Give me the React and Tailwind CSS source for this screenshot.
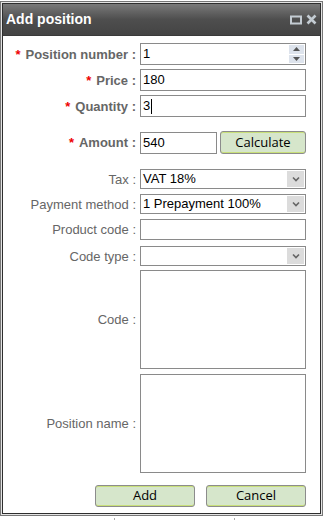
import React from "react";

const labelFont = { fontFamily: '"Liberation Sans", Arial, sans-serif' };

function Label({ children, required, bold }) {
  return (
    <div
      className={`w-[137px] shrink-0 pr-[4px] text-right text-[13px] leading-none text-[#666] ${bold ? "font-bold" : ""}`}
    >
      {required && <span className="mr-[5px] font-bold text-[#e00]">*</span>}
      {children} :
    </div>
  );
}

function Chevron() {
  return (
    <span className="flex h-full w-[17px] items-center justify-center bg-[#dcdcdc]">
      <svg width="8" height="6" viewBox="0 0 8 6">
        <path d="M1 1.5 L4 4.5 L7 1.5" fill="none" stroke="#666" strokeWidth="1.6" />
      </svg>
    </span>
  );
}

function SelectBox({ value }) {
  return (
    <div className="flex h-[20px] w-[166px] items-center border border-[#8a8a8a] bg-white">
      <span className="flex-1 pl-[2px] text-[13px] text-black">{value}</span>
      <span className="flex h-full items-center p-px">
        <Chevron />
      </span>
    </div>
  );
}

function TextBox({ value, width = "w-[166px]", h = "h-[22px]", caret }) {
  return (
    <div className={`flex items-center border border-[#8a8a8a] bg-white ${width} ${h}`}>
      <span className="pl-[2px] text-[13px] text-black">{value}</span>
      {caret && <span className="ml-px h-[15px] w-px bg-black" />}
    </div>
  );
}

function GreenButton({ children, className }) {
  return (
    <button
      className={`flex items-center justify-center rounded-[3px] border border-[#8c8c8c] bg-[#d6e6cb] text-[13px] text-black shadow-[inset_0_1px_0_#c9e07a,inset_0_-1px_0_#c9e07a] ${className}`}
      style={{ fontFamily: '"Open Sans", sans-serif' }}
    >
      {children}
    </button>
  );
}

export default function App() {
  return (
    <div className="relative h-[520px] w-[324px] bg-white" style={labelFont}>
      <div className="mt-[1px] h-[515px] w-[323px] border border-[#777] bg-[#e4e4e4] p-px">
        <div className="flex h-full flex-col border border-[#2e2e2e] bg-white">
          <div className="flex h-[32px] items-center justify-between border-b border-[#3a3a3a] bg-gradient-to-b from-[#7a7a7a] via-[#4e4e4e] to-[#444] pl-[3px] pr-[3px]">
            <span className="text-[14px] font-bold text-white">Add position</span>
            <div className="flex items-center gap-[4px]">
              <svg width="12" height="10" viewBox="0 0 12 10">
                <rect x="1" y="1.5" width="10" height="7" fill="none" stroke="#c3cbd2" strokeWidth="2" />
              </svg>
              <svg width="11" height="11" viewBox="0 0 11 11">
                <path d="M1.5 1.5 L9.5 9.5 M9.5 1.5 L1.5 9.5" stroke="#c3cbd2" strokeWidth="2.6" />
              </svg>
            </div>
          </div>

          <div className="flex flex-1 flex-col pt-[7px]">
            <div className="flex items-center">
              <Label required bold>Position number</Label>
              <div className="flex h-[22px] w-[166px] items-center border border-[#8a8a8a] bg-white">
                <span className="flex-1 pl-[2px] text-[13px] text-black">1</span>
                <div className="flex h-full flex-col gap-px p-px">
                  <span className="flex flex-1 w-[15px] items-center justify-center bg-[#dde3ec]">
                    <svg width="7" height="4" viewBox="0 0 7 4"><path d="M0 4 L3.5 0 L7 4Z" fill="#555" /></svg>
                  </span>
                  <span className="flex flex-1 w-[15px] items-center justify-center bg-[#dde3ec]">
                    <svg width="7" height="4" viewBox="0 0 7 4"><path d="M0 0 L3.5 4 L7 0Z" fill="#555" /></svg>
                  </span>
                </div>
              </div>
            </div>
            <div className="mt-[4px] flex items-center">
              <Label required bold>Price</Label>
              <TextBox value="180" />
            </div>
            <div className="mt-[4px] flex items-center">
              <Label required bold>Quantity</Label>
              <TextBox value="3" caret />
            </div>
            <div className="mt-[14px] flex items-center">
              <Label required bold>Amount</Label>
              <TextBox value="540" width="w-[77px]" />
              <GreenButton className="ml-[3px] h-[23px] w-[86px]">Calculate</GreenButton>
            </div>
            <div className="mt-[15px] flex items-center">
              <Label>Tax</Label>
              <SelectBox value="VAT 18%" />
            </div>
            <div className="mt-[5px] flex items-center">
              <Label>Payment method</Label>
              <SelectBox value="1 Prepayment 100%" />
            </div>
            <div className="mt-[5px] flex items-center">
              <Label>Product code</Label>
              <TextBox value="" h="h-[21px]" />
            </div>
            <div className="mt-[6px] flex items-center">
              <Label>Code type</Label>
              <SelectBox value="" />
            </div>
            <div className="mt-[4px] flex items-center">
              <Label>Code</Label>
              <TextBox value="" h="h-[99px]" />
            </div>
            <div className="mt-[5px] flex items-center">
              <Label>Position name</Label>
              <TextBox value="" h="h-[99px]" />
            </div>
            <div className="mt-[12px] flex justify-end gap-[11px] pr-[14px]">
              <GreenButton className="h-[22px] w-[100px]">Add</GreenButton>
              <GreenButton className="h-[22px] w-[100px]">Cancel</GreenButton>
            </div>
          </div>
        </div>
      </div>
      <div className="absolute bottom-0 left-[114px] h-[3px] w-px bg-[#aaa]" />
      <div className="absolute bottom-0 left-[234px] h-[3px] w-px bg-[#aaa]" />
    </div>
  );
}
